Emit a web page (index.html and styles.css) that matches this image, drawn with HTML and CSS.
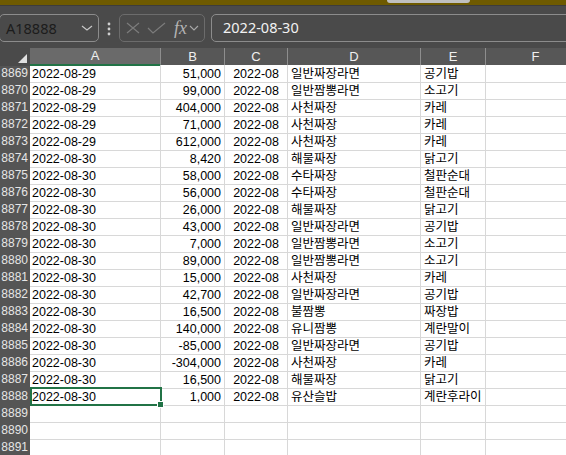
FILE: index.html
```html
<!DOCTYPE html>
<html lang="ko">
<head>
<meta charset="UTF-8">
<title>Sheet</title>
<link rel="stylesheet" href="styles.css">
</head>
<body>

<div class="titlebar"><div class="grip"></div></div>

<div class="formula-bar">
    <div class="name-box">
        <span>A18888</span>
        <svg class="chev" width="12" height="8" viewBox="0 0 12 8"><polyline points="1,2 6,6 11,2" fill="none" stroke="#c8c8c8" stroke-width="1.2"/></svg>
    </div>
    <svg class="dots" width="6" height="14" viewBox="0 0 6 14"><circle cx="3" cy="2" r="1.4" fill="#cfcfcf"/><circle cx="3" cy="7" r="1.4" fill="#cfcfcf"/><circle cx="3" cy="12" r="1.4" fill="#cfcfcf"/></svg>
    <div class="fx-box">
        <svg width="14" height="12" viewBox="0 0 14 12"><path d="M1 1 L13 11 M13 1 L1 11" stroke="#7c7c7c" stroke-width="1.2"/></svg>
        <svg width="19" height="12" viewBox="0 0 19 12"><polyline points="1,6 6,11 18,1" fill="none" stroke="#7c7c7c" stroke-width="1.2"/></svg>
        <i class="fx">fx</i>
        <svg width="10" height="6" viewBox="0 0 10 6"><polyline points="1,1 5,5 9,1" fill="none" stroke="#a8a8a8" stroke-width="1.1"/></svg>
    </div>
    <div class="formula-input">2022-08-30</div>
</div>

<div class="sheet">
    <div class="row head">
        <div class="corner"><span class="tri"></span></div>
        <div class="ch active">A</div><div class="ch">B</div><div class="ch">C</div><div class="ch">D</div><div class="ch">E</div><div class="ch">F</div>
    </div>
    <div class="row"><div class="rh">8869</div><div class="c">2022-08-29</div><div class="c num">51,000</div><div class="c mon">2022-08</div><div class="c kr">일반짜장라면</div><div class="c kr">공기밥</div><div class="c"></div></div>
    <div class="row"><div class="rh">8870</div><div class="c">2022-08-29</div><div class="c num">99,000</div><div class="c mon">2022-08</div><div class="c kr">일반짬뽕라면</div><div class="c kr">소고기</div><div class="c"></div></div>
    <div class="row"><div class="rh">8871</div><div class="c">2022-08-29</div><div class="c num">404,000</div><div class="c mon">2022-08</div><div class="c kr">사천짜장</div><div class="c kr">카레</div><div class="c"></div></div>
    <div class="row"><div class="rh">8872</div><div class="c">2022-08-29</div><div class="c num">71,000</div><div class="c mon">2022-08</div><div class="c kr">사천짜장</div><div class="c kr">카레</div><div class="c"></div></div>
    <div class="row"><div class="rh">8873</div><div class="c">2022-08-29</div><div class="c num">612,000</div><div class="c mon">2022-08</div><div class="c kr">사천짜장</div><div class="c kr">카레</div><div class="c"></div></div>
    <div class="row"><div class="rh">8874</div><div class="c">2022-08-30</div><div class="c num">8,420</div><div class="c mon">2022-08</div><div class="c kr">해물짜장</div><div class="c kr">닭고기</div><div class="c"></div></div>
    <div class="row"><div class="rh">8875</div><div class="c">2022-08-30</div><div class="c num">58,000</div><div class="c mon">2022-08</div><div class="c kr">수타짜장</div><div class="c kr">철판순대</div><div class="c"></div></div>
    <div class="row"><div class="rh">8876</div><div class="c">2022-08-30</div><div class="c num">56,000</div><div class="c mon">2022-08</div><div class="c kr">수타짜장</div><div class="c kr">철판순대</div><div class="c"></div></div>
    <div class="row"><div class="rh">8877</div><div class="c">2022-08-30</div><div class="c num">26,000</div><div class="c mon">2022-08</div><div class="c kr">해물짜장</div><div class="c kr">닭고기</div><div class="c"></div></div>
    <div class="row"><div class="rh">8878</div><div class="c">2022-08-30</div><div class="c num">43,000</div><div class="c mon">2022-08</div><div class="c kr">일반짜장라면</div><div class="c kr">공기밥</div><div class="c"></div></div>
    <div class="row"><div class="rh">8879</div><div class="c">2022-08-30</div><div class="c num">7,000</div><div class="c mon">2022-08</div><div class="c kr">일반짬뽕라면</div><div class="c kr">소고기</div><div class="c"></div></div>
    <div class="row"><div class="rh">8880</div><div class="c">2022-08-30</div><div class="c num">89,000</div><div class="c mon">2022-08</div><div class="c kr">일반짬뽕라면</div><div class="c kr">소고기</div><div class="c"></div></div>
    <div class="row"><div class="rh">8881</div><div class="c">2022-08-30</div><div class="c num">15,000</div><div class="c mon">2022-08</div><div class="c kr">사천짜장</div><div class="c kr">카레</div><div class="c"></div></div>
    <div class="row"><div class="rh">8882</div><div class="c">2022-08-30</div><div class="c num">42,700</div><div class="c mon">2022-08</div><div class="c kr">일반짜장라면</div><div class="c kr">공기밥</div><div class="c"></div></div>
    <div class="row"><div class="rh">8883</div><div class="c">2022-08-30</div><div class="c num">16,500</div><div class="c mon">2022-08</div><div class="c kr">불짬뽕</div><div class="c kr">짜장밥</div><div class="c"></div></div>
    <div class="row"><div class="rh">8884</div><div class="c">2022-08-30</div><div class="c num">140,000</div><div class="c mon">2022-08</div><div class="c kr">유니짬뽕</div><div class="c kr">계란말이</div><div class="c"></div></div>
    <div class="row"><div class="rh">8885</div><div class="c">2022-08-30</div><div class="c num">-85,000</div><div class="c mon">2022-08</div><div class="c kr">일반짜장라면</div><div class="c kr">공기밥</div><div class="c"></div></div>
    <div class="row"><div class="rh">8886</div><div class="c">2022-08-30</div><div class="c num">-304,000</div><div class="c mon">2022-08</div><div class="c kr">사천짜장</div><div class="c kr">카레</div><div class="c"></div></div>
    <div class="row"><div class="rh">8887</div><div class="c">2022-08-30</div><div class="c num">16,500</div><div class="c mon">2022-08</div><div class="c kr">해물짜장</div><div class="c kr">닭고기</div><div class="c"></div></div>
    <div class="row"><div class="rh">8888</div><div class="c sel">2022-08-30</div><div class="c num">1,000</div><div class="c mon">2022-08</div><div class="c kr">유산슬밥</div><div class="c kr">계란후라이</div><div class="c"></div></div>
    <div class="row"><div class="rh">8889</div><div class="c"></div><div class="c"></div><div class="c"></div><div class="c"></div><div class="c"></div><div class="c"></div></div>
    <div class="row"><div class="rh">8890</div><div class="c"></div><div class="c"></div><div class="c"></div><div class="c"></div><div class="c"></div><div class="c"></div></div>
    <div class="row"><div class="rh">8891</div><div class="c"></div><div class="c"></div><div class="c"></div><div class="c"></div><div class="c"></div><div class="c"></div></div>
</div>

</body>
</html>
```

FILE: styles.css
```css
/* page */
body {
    margin: 0;
    width: 566px;
    height: 455px;
    overflow: hidden;
    background-color: #ffffff;
    font-family: "Noto Sans", "Liberation Sans", sans-serif;
}

/* faixa do topo */
.titlebar {
    height: 5px;
    background-color: #6e5a00;
    border-bottom: 1px solid #3c3c3c;
}

.grip {
    margin-left: 387px;
    width: 83px;
    height: 3px;
    background-color: #c0c0c0;
    border-radius: 0 0 4px 4px;
}

/* barra de formula */
.formula-bar {
    height: 42px;
    box-sizing: border-box;
    padding-top: 8px;
    background-color: #4a4a4a;
    display: flex;
    align-items: flex-start;
}

.name-box {
    width: 100px;
    height: 28px;
    box-sizing: border-box;
    margin-left: -1px;
    border: 1px solid #8c8c8c;
    border-radius: 5px;
    display: flex;
    align-items: center;
    justify-content: space-between;
    padding: 0 5px 0 6px;
    font-size: 14.5px;
    color: #1c1c1c;
}

.dots {
    margin: 8px 7px 0 7px;
}

.fx-box {
    width: 86px;
    height: 28px;
    box-sizing: border-box;
    border: 1px solid #6c6c6c;
    border-radius: 5px;
    display: flex;
    align-items: center;
    gap: 7px;
    padding-left: 6px;
}

.fx {
    font-family: "Liberation Serif", "DejaVu Serif", serif;
    font-size: 18px;
    color: #b4b4b4;
    margin-left: 1px;
    margin-right: -5px;
    line-height: 1;
}

.formula-input {
    flex: 1;
    height: 28px;
    box-sizing: border-box;
    margin-left: 6px;
    margin-right: -10px;
    border: 1px solid #8c8c8c;
    border-radius: 5px;
    padding-left: 11px;
    line-height: 25px;
    font-size: 14.5px;
    color: #f2f2f2;
}

/* planilha */
.row {
    display: grid;
    grid-template-columns: 30px 131px 64px 63px 133px 65px 100px;
    height: 17px;
}

.row.head {
    background-color: #575757;
}

.corner {
    position: relative;
    background-color: #4a4a4a;
}

.corner .tri {
    position: absolute;
    right: 3px;
    bottom: 3px;
    width: 0;
    height: 0;
    border-left: 9px solid transparent;
    border-bottom: 9px solid #e0e0e0;
}

.ch {
    box-sizing: border-box;
    border-right: 1px solid #8e8e8e;
    text-align: center;
    font-family: "Liberation Sans", sans-serif;
    font-size: 13px;
    line-height: 17px;
    color: #f0f0f0;
}

.ch.active {
    background-color: #6a6a6a;
    border-bottom: 2px solid #217346;
    line-height: 16px;
}

.rh {
    box-sizing: border-box;
    background-color: #555555;
    border-bottom: 1px solid #7c7c7c;
    text-align: right;
    padding-right: 2px;
    font-family: "Liberation Sans", sans-serif;
    font-size: 12px;
    line-height: 17px;
    color: #e6e6e6;
    white-space: nowrap;
}

.c {
    box-sizing: border-box;
    border-right: 1px solid #d8d8d8;
    border-bottom: 1px solid #d8d8d8;
    padding: 2px 0 0 2px;
    font-family: "Liberation Sans", "Noto Sans CJK KR", sans-serif;
    font-size: 12.5px;
    line-height: 14px;
    color: #000000;
    white-space: nowrap;
    overflow: hidden;
}

.c.num {
    text-align: right;
    padding-right: 3px;
}

.c.mon {
    text-align: right;
    padding-right: 8px;
}

.c.kr {
    padding-left: 3px;
}

/* celula selecionada */
.c.sel {
    position: relative;
    overflow: visible;
    z-index: 1;
}

.c.sel::after {
    content: "";
    position: absolute;
    left: 0;
    top: -1px;
    right: -2px;
    bottom: -1px;
    border: 2px solid #217346;
}

.c.sel::before {
    content: "";
    position: absolute;
    right: -4px;
    bottom: -3px;
    width: 5px;
    height: 5px;
    background-color: #217346;
    border: 1px solid #ffffff;
    z-index: 2;
}
```
